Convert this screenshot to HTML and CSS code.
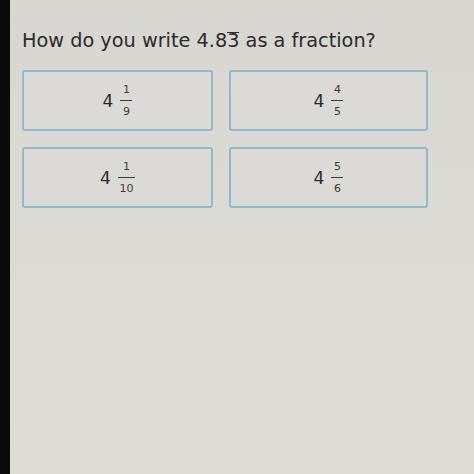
FILE: index.html
```html
<!DOCTYPE html>
<html>
<head>
<meta charset="utf-8">
<link rel="stylesheet" href="styles.css">
</head>
<body>
<div class="screen">
  <div class="bezel"></div>
  <main class="content">
    <p class="question">How do you write 4.8<span class="rep">3</span> as a fraction?</p>
    <div class="choices">
      <div class="choice c1"><span class="whole">4</span><span class="frac"><span class="num">1</span><span class="den">9</span></span></div>
      <div class="choice c2"><span class="whole">4</span><span class="frac"><span class="num">4</span><span class="den">5</span></span></div>
      <div class="choice c3"><span class="whole">4</span><span class="frac"><span class="num">1</span><span class="den">10</span></span></div>
      <div class="choice c4"><span class="whole">4</span><span class="frac"><span class="num">5</span><span class="den">6</span></span></div>
    </div>
  </main>
</div>
</body>
</html>
```
FILE: styles.css
```css
html, body {
  margin: 0;
  padding: 0;
  width: 474px;
  height: 474px;
  overflow: hidden;
}
body {
  background: #dad8d3;
  font-family: "DejaVu Sans", "Liberation Sans", sans-serif;
  color: #2e2e2e;
}
.screen {
  display: flex;
  height: 474px;
}
.bezel {
  width: 10px;
  flex: none;
  background: #0a0a0a;
}
.content {
  flex: 1;
  padding: 29px 0 0 12px;
  background: linear-gradient(180deg, #d8d6d1 0%, #dcdad5 40%, #dedcd7 100%);
}
.question {
  margin: 0 0 17px 0;
  font-size: 19.3px;
  line-height: 24px;
  color: #2b2b2b;
  white-space: nowrap;
}
.rep {
  display: inline-block;
  border-top: 1.5px solid #2b2b2b;
  line-height: 15px;
  vertical-align: baseline;
}
.choices {
  display: grid;
  grid-template-columns: 191px 199px;
  grid-auto-rows: 61px;
  column-gap: 16px;
  row-gap: 16px;
}
.choice {
  box-sizing: border-box;
  border: 2px solid #8fbac9;
  border-radius: 3px;
  display: flex;
  align-items: center;
  justify-content: center;
  gap: 7px;
  background: #dcdad6;
}
.whole {
  font-size: 17px;
  line-height: 1;
  color: #2a2a2a;
  padding-top: 2px;
}
.frac {
  display: inline-flex;
  flex-direction: column;
  align-items: center;
  font-size: 11px;
  color: #3a3a3a;
}
.num {
  padding: 0 1px 4px;
  border-bottom: 1.5px solid #3a3a3a;
  min-width: 10px;
  text-align: center;
  line-height: 13px;
}
.den {
  padding: 4px 1px 0;
  line-height: 13px;
}
.c3 .num {
  min-width: 15px;
}
```
